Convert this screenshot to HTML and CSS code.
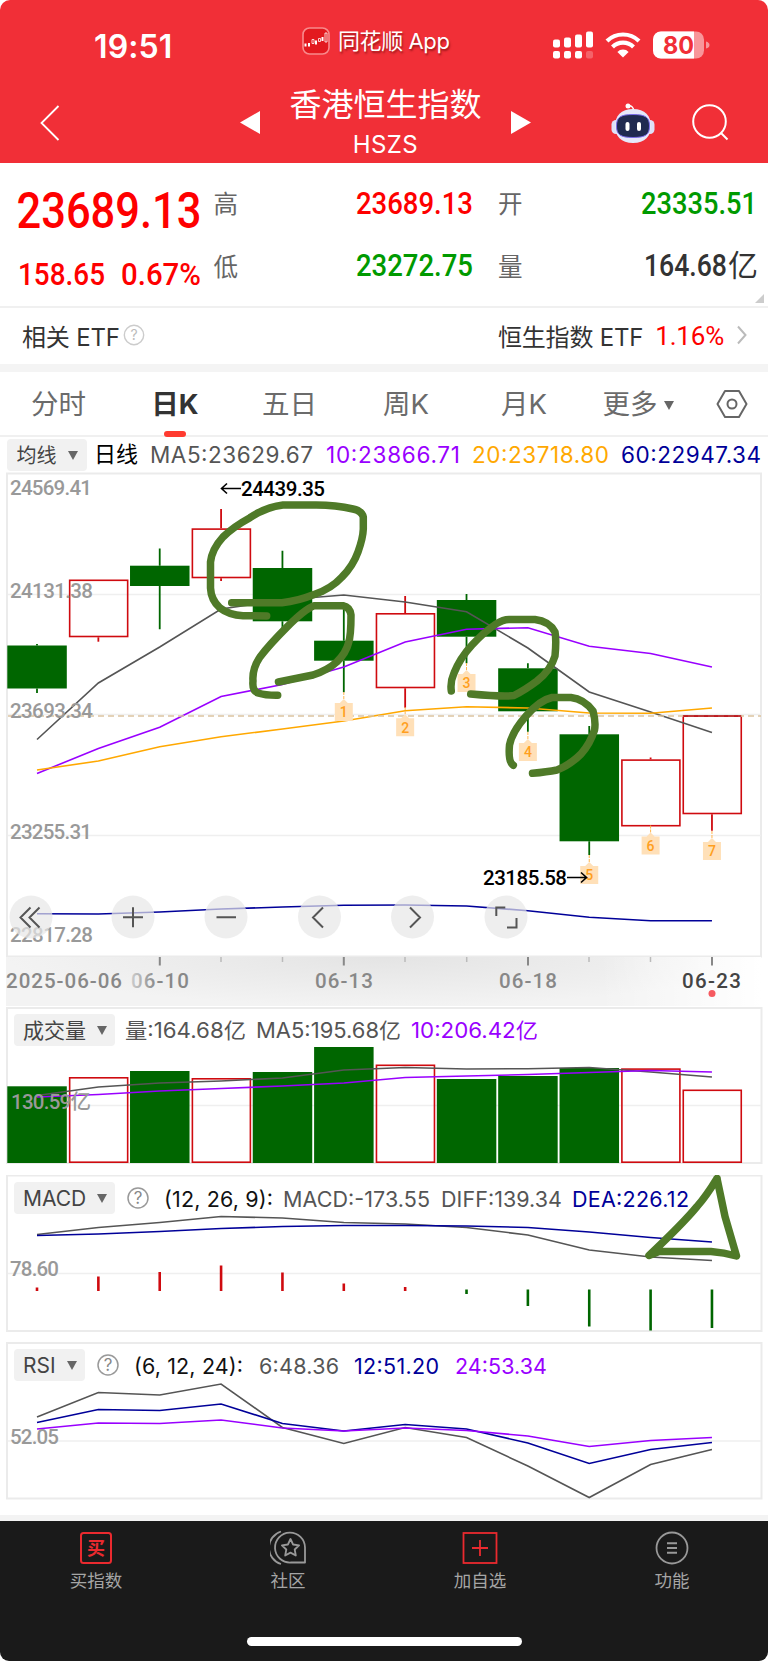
FILE: index.html
```html
<!DOCTYPE html>
<html lang="zh-CN">
<head>
    <meta charset="UTF-8">
    <meta name="viewport" content="width=device-width, initial-scale=1.0">
    <title>香港恒生指数</title>
    <link rel="stylesheet" href="styles.css">
</head>
<body>
<div class="app">

    <!-- 顶部 -->
    <header class="header">
        <div class="status">
            <span class="time">19:51</span>
            <div class="from-app">
                <svg width="28" height="28" viewBox="0 0 28 28">
                    <rect x="1" y="1" width="26" height="26" rx="6.5" fill="#e3191f" stroke="#f88a8c" stroke-width="1.6"/>
                    <path d="M3.500 16.500v3M7 16v3.500M14 13.500v4M20.500 10v4" stroke="#fff" stroke-width="2"/>
                    <path d="M10 12.500h2v4h-2zM16.500 11.500h2v3h-2zM23 6h2v9h-2z" stroke="#fff" stroke-width=".8" fill="none"/>
                </svg>
                <span>同花顺 App</span>
            </div>
            <div class="status-icons">
                <svg width="40" height="28" viewBox="0 0 40 28" fill="#fff">
                    <rect x="0" y="8.500" width="7" height="8" rx="2"/>
                    <rect x="11" y="6.500" width="7" height="10" rx="2"/>
                    <rect x="22" y="3.500" width="7" height="13" rx="2"/>
                    <rect x="33" y="0.500" width="7" height="16" rx="2"/>
                    <rect x="0" y="20" width="7" height="7.500" rx="2"/>
                    <rect x="11" y="20" width="7" height="7.500" rx="2"/>
                    <rect x="22" y="20" width="7" height="7.500" rx="2"/>
                    <rect x="33" y="20" width="7" height="7.500" rx="2" opacity=".25"/>
                </svg>
                <svg class="wifi" width="36" height="26" viewBox="0 0 36 26">
                    <path d="M2 9a23 23 0 0 1 32 0M7.500 15a15 15 0 0 1 21 0" fill="none" stroke="#fff" stroke-width="4.200"/>
                    <path d="M18 25.500l-5.600-5.600a8 8 0 0 1 11.200 0z" fill="#fff"/>
                </svg>
                <svg width="57" height="28" viewBox="0 0 57 28">
                    <rect x="0" y="0.500" width="51" height="27" rx="8" fill="#f8969a"/>
                    <path d="M8 .5h33v27H8a8 8 0 0 1-8-8v-11a8 8 0 0 1 8-8z" fill="#fff"/>
                    <path d="M53 10.500q3.500 1 3.500 3.500t-3.500 3.500z" fill="#f8969a"/>
                    <text x="10" y="22.500" textLength="31" lengthAdjust="spacingAndGlyphs" class="battery">80</text>
                </svg>
            </div>
        </div>
        <div class="title-bar">
            <svg class="back" width="20" height="36" viewBox="0 0 20 36"><path d="M18.500 1L1.500 18l17 17" fill="none" stroke="#fff" stroke-width="1.800"/></svg>
            <div class="title-center">
                <svg width="20" height="23" viewBox="0 0 20 23"><path d="M0 11.500L20 0v23z" fill="#fff"/></svg>
                <div class="title">
                    <h1>香港恒生指数</h1>
                    <p>HSZS</p>
                </div>
                <svg width="20" height="23" viewBox="0 0 20 23"><path d="M20 11.500L0 0v23z" fill="#fff"/></svg>
            </div>
            <div class="title-icons">
                <svg width="44" height="40" viewBox="0 0 44 40">
                    <path d="M17 3q5-1 6 5" fill="none" stroke="#fff" stroke-width="1.500"/>
                    <circle cx="17" cy="3" r="2.500" fill="#fff"/>
                    <rect x="0.500" y="17" width="9" height="14" rx="4.500" fill="#dfe1f8"/>
                    <rect x="34.500" y="17" width="9" height="14" rx="4.500" fill="#dfe1f8"/>
                    <path d="M22 6c12 0 18 7 18 17s-6 17-18 17S4 33 4 23 10 6 22 6z" fill="#e6e8fa"/>
                    <path d="M22 11.500c13 0 16.500 3 16.500 11.500S35 34.500 22 34.500 5.500 31.500 5.500 23 9 11.500 22 11.500z" fill="#202a50" stroke="#7a6be8" stroke-width="1"/>
                    <rect x="14.500" y="19" width="4" height="9" rx="2" fill="#fff"/>
                    <rect x="26" y="19" width="4" height="9" rx="2" fill="#fff"/>
                </svg>
                <svg width="37" height="37" viewBox="0 0 37 37"><circle cx="17.500" cy="17.500" r="16.300" fill="none" stroke="#fff" stroke-width="2"/><path d="M29 29l6.500 6.500" stroke="#fff" stroke-width="2"/></svg>
            </div>
        </div>
    </header>

    <!-- 行情 -->
    <svg class="quote" viewBox="0 163 768 145">
        <path d="M0 307h768" stroke="#f0f0f0" stroke-width="2"/>
        <g class="din">
            <g class="up">
                <text class="price" x="16.500" y="227.500" textLength="185" lengthAdjust="spacingAndGlyphs">23689.13</text>
                <text class="num" x="18" y="285" textLength="87" lengthAdjust="spacingAndGlyphs">158.65</text>
                <text class="num" x="121" y="285" textLength="80" lengthAdjust="spacingAndGlyphs">0.67%</text>
                <text class="num" x="356" y="214" textLength="117" lengthAdjust="spacingAndGlyphs">23689.13</text>
            </g>
            <g class="down">
                <text class="num" x="356" y="276" textLength="117" lengthAdjust="spacingAndGlyphs">23272.75</text>
                <text class="num" x="641" y="214" textLength="116" lengthAdjust="spacingAndGlyphs">23335.51</text>
            </g>
            <text class="num dark" x="644" y="276" textLength="83" lengthAdjust="spacingAndGlyphs">164.68</text>
        </g>
        <text class="dark" x="728" y="276" font-size="30">亿</text>
        <g class="name">
            <text x="213.500" y="213">高</text>
            <text x="213.500" y="275.500">低</text>
            <text x="498" y="213">开</text>
            <text x="498" y="275.500">量</text>
        </g>
        <path d="M764 294v9h-9z" fill="#ccc"/>
    </svg>

    <section class="etf">
        <span class="etf-name">相关 ETF</span>
        <svg width="22" height="22" viewBox="0 0 22 22"><circle cx="11" cy="11" r="9.700" fill="none" stroke="#ccc" stroke-width="1.400"/><text x="11" y="16" text-anchor="middle" class="q light">?</text></svg>
        <span class="etf-link">恒生指数 ETF</span>
        <span class="etf-rate">1.16%</span>
        <svg width="10" height="20" viewBox="0 0 10 20"><path d="M1 1.500l7.500 8.500L1 18.500" fill="none" stroke="#bbb" stroke-width="2"/></svg>
    </section>

    <!-- 周期 -->
    <nav class="tabs">
        <span>分时</span>
        <span class="active">日K</span>
        <span>五日</span>
        <span>周K</span>
        <span>月K</span>
        <span>更多<i class="caret"></i></span>
        <svg width="32" height="30" viewBox="0 0 32 30"><path d="M9 2h14l7.500 13L23 28H9L1.500 15z" fill="none" stroke="#666" stroke-width="2" stroke-linejoin="round"/><circle cx="16" cy="15" r="4.500" fill="none" stroke="#666" stroke-width="2"/></svg>
    </nav>

    <div class="legend legend-ma">
        <button>均线<i class="caret"></i></button>
        <svg width="681" height="34" viewBox="87 438 681 34">
            <text x="94" y="462" font-size="22" textLength="44" fill="#000">日线</text>
            <text class="c-gray" x="150" y="463" textLength="163">MA5:23629.67</text>
            <text class="c-purple" x="326" y="463" textLength="134">10:23866.71</text>
            <text class="c-orange" x="472" y="463" textLength="137">20:23718.80</text>
            <text class="c-navy" x="621" y="463" textLength="140">60:22947.34</text>
        </svg>
    </div>

    <!-- K线图 -->
    <svg class="chart" viewBox="0 472 768 535" id="kline">
        <defs>
            <linearGradient id="fade" x1="0" x2="1">
                <stop offset="0" stop-color="#fff" stop-opacity="0"/>
                <stop offset="1" stop-color="#fff"/>
            </linearGradient>
            <radialGradient id="shade" cx=".5" cy="0" r="1" gradientTransform="translate(.25 0) scale(.5 1)">
                <stop offset="0" stop-color="#e4e4e4"/>
                <stop offset="1" stop-color="#f3f3f3"/>
            </radialGradient>
            <linearGradient id="dim" x1="0" x2="1">
                <stop offset="0" stop-color="#ccc"/>
                <stop offset=".45" stop-color="#888"/>
            </linearGradient>
        </defs>
        <rect class="frame" x="7" y="473.500" width="754" height="483"/>
        <path class="grid" d="M8 594.500h753M8 714.500h753M8 835.500h753"/>
        <g id="candles"></g>
        <g id="maLines"></g>
        <path d="M8 716h753" stroke="#dcc3a0" stroke-width="1.300" stroke-dasharray="6 4"/>
        <path d="M683 716h58" stroke="#b5161c" stroke-width="1.600"/>
        <g class="axis">
            <text x="10" y="494.500" textLength="82">24569.41</text>
            <text x="10" y="597.500" textLength="83">24131.38</text>
            <text x="10" y="718" textLength="83">23693.34</text>
            <text x="10" y="838.700" textLength="82">23255.31</text>
            <text x="10" y="941.700" textLength="83">22817.28</text>
        </g>
        <g id="badges"></g>
        <g class="peak">
            <text x="241" y="496" textLength="84">24439.35</text>
            <text x="483" y="885" textLength="84">23185.58</text>
            <path d="M241 488.500h-19M227 483.500l-5.500 5 5.500 5M567 877.500h19M581 872.500l5.500 5-5.500 5" fill="none" stroke="#000" stroke-width="1.600"/>
        </g>
        <g class="pen">
            <path d="M231.700 602.700H282Q298 601 314 594.500Q331 589 342 577Q353 566 358 552Q363 538 363.300 529V517Q362 511 353 509Q336 505 316 505H283Q266 507 250 517.700Q233 527 223 537Q212 549 210.500 562V588Q211 600 220 608Q229 615 243 615.700L266.700 616"/>
            <path d="M278.500 682L313 675Q328 670 337 661.700Q346 653 348.500 643Q351 636 351 615Q350 607 343 605.700H314Q305 609 287 627Q269 645 260 657Q252 669 253 681Q252 691 258 693Q266 695.500 277.700 695.300"/>
            <path d="M451.300 691Q450 682 454 673Q460 658 472 645Q484 632 496 624Q503 619.500 509 619.500H535Q549 621 555 632Q556.500 640 555 656Q551 670 537 681Q525 690 514 695.500Q504 697 470.700 694"/>
            <path d="M513.300 765.300Q508 762 509.500 745Q512 732 526 716Q540 700 552 697.500H571Q584 699 593 711Q596 722 594.500 730Q590 744 581 754Q570 765 557 770Q547 772 532.500 773.300"/>
        </g>

        <!-- 日期轴 -->
        <rect x="6" y="957" width="755" height="49" fill="url(#shade)"/>
        <rect x="600" y="957" width="161" height="49" fill="url(#fade)"/>
        <path d="M159.800 957v8.500M343.800 957v8.500M528 957v8.500M712 957v8.500" stroke="#888" stroke-width="2"/>
        <path d="M221 957v5M282.500 957v5M405 957v5M466.700 957v5M589 957v5M650.500 957v5" stroke="#bbb" stroke-width="1.500"/>
        <g class="date">
            <text x="6" y="988" textLength="116">2025-06-06</text>
            <text x="131" y="988" textLength="58" class="dim">06-10</text>
            <text x="315" y="988" textLength="58">06-13</text>
            <text x="499" y="988" textLength="58">06-18</text>
            <text x="682" y="988" textLength="59" class="today">06-23</text>
        </g>
        <circle cx="712" cy="993.500" r="3.500" fill="#f65a60"/>

        <!-- 操作按钮 -->
        <g class="ctrl">
            <circle cx="31" cy="917" r="21.500"/><circle cx="133" cy="917" r="21.500"/><circle cx="226" cy="917" r="21.500"/>
            <circle cx="319.500" cy="917" r="21.500"/><circle cx="412.500" cy="917" r="21.500"/><circle cx="506" cy="917" r="21.500"/>
            <path d="M30.500 907.500l-10 10 10 10M39.500 907.500l-10 10 10 10M123 917.300h20M133 907.300v20M216.500 917.300h19.500M323 907.500l-10 10 10 10M410 907.500l10 10-10 10M496.300 916v-8.500h9M507 927.500h9.500v-9.500"/>
        </g>
    </svg>

    <!-- 成交量 -->
    <section class="panel">
        <div class="legend">
            <button>成交量<i class="caret"></i></button>
            <svg width="640" height="34" viewBox="115 1014 640 34">
                <g font-size="21">
                    <text class="c-gray" x="125" y="1039" textLength="121" lengthAdjust="spacingAndGlyphs">量:164.68亿</text>
                    <text class="c-gray" x="256" y="1039" textLength="145" lengthAdjust="spacingAndGlyphs">MA5:195.68亿</text>
                    <text class="c-purple" x="411" y="1039" textLength="127" lengthAdjust="spacingAndGlyphs">10:206.42亿</text>
                </g>
            </svg>
        </div>
        <svg class="chart overlay" viewBox="0 1007 768 158">
            <rect class="frame" x="7" y="1008" width="754.500" height="155"/>
            <path class="grid" d="M8 1105.500h753"/>
            <g id="volume"></g>
            <g class="axis"><text x="11" y="1108.500" textLength="80">130.59亿</text></g>
        </svg>
    </section>

    <!-- MACD -->
    <section class="panel">
        <div class="legend">
            <button>MACD<i class="caret"></i></button>
            <svg width="640" height="34" viewBox="115 1181 640 34">
                <circle cx="138" cy="1198" r="10" class="q-ring"/><text x="138" y="1204" text-anchor="middle" class="q">?</text>
                <text x="164" y="1206.500" textLength="109" fill="#111">(12, 26, 9):</text>
                <text class="c-gray" x="283" y="1206.500" textLength="147">MACD:-173.55</text>
                <text class="c-gray" x="441" y="1206.500" textLength="121">DIFF:139.34</text>
                <text class="c-navy" x="572" y="1206.500" textLength="117">DEA:226.12</text>
            </svg>
        </div>
        <svg class="chart overlay" viewBox="0 1174.500 768 158">
            <rect class="frame" x="7" y="1175" width="754.500" height="155.500"/>
            <path class="grid" d="M8 1273h753"/>
            <g id="macd"></g>
            <g class="axis"><text x="10" y="1275.500" textLength="49">78.60</text></g>
            <g class="pen">
                <path d="M717 1178Q706 1196 697 1206Q683 1223 649 1255L659 1251H711Q724 1252 736.500 1255.500L725 1216L717 1178"/>
            </g>
        </svg>
    </section>

    <!-- RSI -->
    <section class="panel">
        <div class="legend">
            <button>RSI<i class="caret"></i></button>
            <svg width="640" height="34" viewBox="85 1349 640 34">
                <circle cx="108" cy="1366" r="10" class="q-ring"/><text x="108" y="1372" text-anchor="middle" class="q">?</text>
                <text x="134" y="1374.500" textLength="109" fill="#111">(6, 12, 24):</text>
                <text class="c-gray" x="259" y="1374.500" textLength="80">6:48.36</text>
                <text class="c-navy" x="354" y="1374.500" textLength="85">12:51.20</text>
                <text class="c-purple" x="455" y="1374.500" textLength="92">24:53.34</text>
            </svg>
        </div>
        <svg class="chart overlay" viewBox="0 1342 768 158">
            <rect class="frame" x="7" y="1343" width="754.500" height="155.500"/>
            <path class="grid" d="M8 1441h753"/>
            <g id="rsi"></g>
            <g class="axis"><text x="10" y="1443.500" textLength="49">52.05</text></g>
        </svg>
    </section>

    <!-- 底部导航 -->
    <footer class="bottom">
        <div class="bottom-tabs">
            <div class="item">
                <svg width="36" height="36" viewBox="0 0 36 36"><rect x="3" y="3" width="30" height="30" rx="2.500" fill="none" stroke="#ea2a2f" stroke-width="2"/><text x="18" y="24.500" text-anchor="middle" class="buy">买</text></svg>
                <span>买指数</span>
            </div>
            <div class="item">
                <svg width="36" height="36" viewBox="0 0 36 36" fill="none" stroke="#999" stroke-width="1.800" stroke-linejoin="round">
                    <path d="M11 1.500a17 17 0 0 0 0 32.500"/>
                    <path d="M35 32.500H21a15 15 0 1 1 14-15z"/>
                    <path d="M20.500 9l2.600 5.500 6 .8-4.400 4.200 1.100 6-5.300-2.900-5.300 2.900 1.100-6-4.400-4.200 6-.8z"/>
                </svg>
                <span>社区</span>
            </div>
            <div class="item">
                <svg width="36" height="36" viewBox="0 0 36 36" fill="none" stroke="#ea2a2f" stroke-width="1.800"><rect x="1.500" y="3" width="33" height="30"/><path d="M10 18h16M18 10v16"/></svg>
                <span>加自选</span>
            </div>
            <div class="item">
                <svg width="36" height="36" viewBox="0 0 36 36" fill="none" stroke="#999" stroke-width="1.800"><circle cx="18" cy="18" r="15.500"/><path d="M13 13.300h10M13 18h10M13 22.700h10" stroke-width="2"/></svg>
                <span>功能</span>
            </div>
        </div>
        <div class="home-bar"></div>
    </footer>
</div>

<script src="script.js"></script>
</body>
</html>
```
FILE: styles.css
```css
* {
    box-sizing: border-box;
}
body {
    margin: 0;
    background: #fff;
    font-family: Inter, "Noto Sans CJK SC", sans-serif;
    color: #333;
}
.app {
    width: 768px;
    height: 1662px;
    overflow: hidden;
    display: flex;
    flex-direction: column;
}
svg {
    display: block;
    flex-shrink: 0;
}
button {
    font-family: inherit;
    border: none;
}

/* 顶部 */
.header {
    height: 163px;
    background: #f12f37;
    border-radius: 10px 10px 0 0;
    color: #fff;
    flex-shrink: 0;
}
.status {
    height: 82px;
    padding: 7px 58px 0 94px;
    display: grid;
    grid-template-columns: 208px 1fr auto;
    align-items: center;
}
.time {
    font-size: 32px;
    font-weight: 600;
    letter-spacing: 0.1px;
    padding-top: 4px;
}
.from-app {
    display: flex;
    align-items: center;
    gap: 8px;
    height: 28px;
    font-size: 22px;
    letter-spacing: -0.4px;
    margin-top: -7px;
    text-shadow: 1px 2px 2px rgba(80, 0, 0, 0.5);
}
.from-app span {
    margin-top: -4px;
}
.status-icons {
    display: flex;
    align-items: center;
}
.wifi {
    margin: 0 12px;
}
.battery {
    font-size: 24px;
    font-weight: 700;
    fill: #f12f37;
}
.title-bar {
    height: 81px;
    display: grid;
    grid-template-columns: 240px 291px 1fr;
    align-items: center;
}
.back {
    margin-left: 40px;
}
.title-center {
    display: flex;
    align-items: center;
    justify-content: space-between;
}
.title {
    text-align: center;
    height: 81px;
}
.title h1 {
    margin: 2px 0 0;
    font-size: 32px;
    font-weight: 400;
    line-height: 42px;
}
.title p {
    margin: 3px 0 0;
    font-size: 24px;
    letter-spacing: 0.4px;
    line-height: 32px;
}
.title-icons {
    display: flex;
    align-items: center;
    gap: 37px;
    margin-left: 80px;
}

/* 行情 */
.quote {
    width: 768px;
    height: 145px;
}
.din {
    font-family: Roboto, sans-serif;
}
.price {
    font-size: 50px;
    font-weight: 500;
}
.num {
    font-size: 31.5px;
    font-weight: 500;
}
.up {
    fill: #fe0000;
}
.down {
    fill: #009a00;
}
.dark {
    fill: #333;
}
.name {
    font-size: 24.5px;
    fill: #666;
}
.etf {
    display: flex;
    align-items: center;
    height: 64px;
    padding: 0 21px 2px 22px;
    border-bottom: 8px solid #f4f4f4;
    font-size: 24px;
    letter-spacing: -0.2px;
    flex-shrink: 0;
}
.etf-name {
    margin-right: 3px;
}
.etf-link {
    margin-left: auto;
}
.etf-rate {
    font-family: Roboto, sans-serif;
    font-size: 26px;
    color: #fe0000;
    margin: 2px 13px 0 12px;
}
.q {
    font-size: 17px;
    fill: #888;
}
.q.light {
    font-size: 14px;
    fill: #bbb;
}
.q-ring {
    fill: none;
    stroke: #999;
    stroke-width: 1.5;
}

/* 周期切换 */
.tabs {
    display: grid;
    grid-template-columns: 117px 116px 113px 120px 116px 112px 74px;
    align-items: center;
    height: 65px;
    border-bottom: 2px solid #f0f0f0;
    font-size: 27.5px;
    color: #6b6b6b;
    flex-shrink: 0;
}
.tabs span {
    height: 64px;
    line-height: 64px;
    text-align: center;
    white-space: nowrap;
}
.tabs svg {
    justify-self: center;
    margin-left: 2px;
}
.tabs .active {
    font-weight: 700;
    color: #333;
}
.tabs .active::after {
    content: "";
    display: block;
    width: 22px;
    height: 6px;
    margin: -5px auto 0;
    border-radius: 3px;
    background: #ff3b30;
}
.caret {
    display: inline-block;
    border: 5.5px solid transparent;
    border-top: 9px solid #666;
    border-bottom: 0;
    margin-left: 6px;
    vertical-align: 4px;
}

/* 指标图例 */
.legend {
    display: flex;
    align-items: center;
    height: 32px;
    font-size: 21.5px;
    padding-left: 14px;
    flex-shrink: 0;
}
.legend button {
    height: 32px;
    padding: 0 8px 0 9px;
    background: #f1f1f1;
    border-radius: 4px;
    font-size: 21px;
    line-height: 34px;
    color: #444;
    white-space: nowrap;
}
.legend .caret {
    margin-left: 11px;
    vertical-align: 3px;
}
.legend-ma {
    padding: 1px 0 0 7px;
    height: 35px;
    font-size: 22.5px;
}
.legend-ma button {
    width: 80px;
    padding: 0;
    font-size: 20px;
}
.c-gray {
    fill: #555;
}
.c-purple {
    fill: #9900ff;
}
.c-orange {
    fill: #ffa800;
}
.c-navy {
    fill: #000099;
}

/* 图表 */
.chart {
    width: 768px;
}
#kline {
    height: 535px;
}
.frame {
    fill: none;
    stroke: #ebebeb;
    stroke-width: 2;
}
.grid {
    stroke: #efefef;
    stroke-width: 1.5;
    fill: none;
}
.axis,
.date,
.peak {
    font-family: Roboto, "Noto Sans CJK SC", sans-serif;
    font-size: 20.5px;
    font-weight: 500;
    fill: #999;
}
.date {
    fill: #888;
}
.date .dim {
    fill: url(#dim);
}
.date .today {
    fill: #444;
}
.peak {
    fill: #000;
}
.line {
    fill: none;
    stroke-width: 1.6;
}
.pen path {
    fill: none;
    stroke: #4f7a28;
    stroke-width: 7.5;
    stroke-linecap: round;
    stroke-linejoin: round;
}
.ctrl circle {
    fill: #e7e7e7;
    fill-opacity: 0.7;
}
.ctrl path {
    fill: none;
    stroke: #555;
    stroke-width: 2;
}
.badge {
    fill: #ffe0b8;
}
.badge-num {
    font-family: Roboto, sans-serif;
    font-size: 14px;
    font-weight: 500;
    fill: #ff9f20;
    text-anchor: middle;
}
.panel {
    display: grid;
    height: 158px;
    margin-bottom: 9.5px;
    flex-shrink: 0;
}
.panel > * {
    grid-area: 1 / 1;
}
.panel .legend {
    margin-top: 7px;
}
.panel .overlay {
    height: 158px;
}

/* 底部导航 */
.bottom {
    height: 147px;
    margin-top: 5px;
    border-top: 6px solid #f3f3f3;
    flex-shrink: 0;
}
.bottom-tabs {
    display: grid;
    grid-template-columns: repeat(4, 1fr);
    height: 140px;
    padding-top: 9px;
    background: #1a1a1a;
    border-radius: 0 0 9px 9px;
}
.item {
    display: flex;
    flex-direction: column;
    align-items: center;
    font-size: 17.5px;
    line-height: 26px;
    color: #a5a5a5;
    gap: 2px;
}
.buy {
    font-size: 18px;
    font-weight: 700;
    fill: #ea2a2f;
}
.home-bar {
    width: 275px;
    height: 9px;
    margin: -24px auto 0;
    border-radius: 5px;
    background: #fff;
}
```
FILE: script.js
```js
const NS = 'http://www.w3.org/2000/svg';
const RED = '#cf0a0f';
const GREEN = '#006600';
const xs = Array.from({ length: 12 }, (_, i) => 37 + i * 61.36);

function add(id, tag, attrs, text) {
    const el = document.createElementNS(NS, tag);
    for (const k in attrs) el.setAttribute(k, attrs[k]);
    if (text) el.textContent = text;
    document.getElementById(id).appendChild(el);
}

function line(id, ys, color) {
    add(id, 'polyline', { class: 'line', stroke: color, points: ys.map((y, i) => xs[i] + ',' + y).join(' ') });
}

function body(id, i, top, bottom, up) {
    if (up) {
        add(id, 'rect', { x: xs[i] - 28.7, y: top + 0.8, width: 58, height: bottom - top - 1.6, fill: 'none', stroke: RED, 'stroke-width': 1.6 });
    } else {
        add(id, 'rect', { x: xs[i] - 29.7, y: top, width: 59.5, height: bottom - top, fill: GREEN });
    }
}

// 实体顶, 实体底, 最高, 最低, 是否上涨
const candles = [
    [645.5, 688.5, 644, 693, 0],
    [579.5, 637.3, 579.5, 641.7, 1],
    [565.7, 586, 548.5, 629.3, 0],
    [528.3, 578.3, 509, 581, 1],
    [568, 621.3, 550.7, 630, 0],
    [640.7, 660.7, 602.7, 692.3, 0],
    [613, 688.3, 596, 707.7, 1],
    [600, 636.7, 594, 663.3, 0],
    [668.3, 711.3, 663.3, 731.7, 0],
    [734.3, 841.3, 726, 855, 0],
    [759.3, 826.5, 757.5, 826.5, 1],
    [715.3, 814.3, 715.3, 830.7, 1]
];
candles.forEach(([top, bottom, high, low, up], i) => {
    const c = up ? RED : GREEN;
    add('candles', 'path', { d: `M${xs[i]} ${high}V${top}M${xs[i]} ${bottom}V${low}`, stroke: c, 'stroke-width': 1.8 });
    body('candles', i, top, bottom, up);
});

line('maLines', [739.5, 683, 647, 609, 600, 595, 602, 611.7, 648, 692, 712, 732.5], '#555');
line('maLines', [773.5, 748.5, 727.3, 696.5, 684.5, 667, 642, 629.3, 627.7, 646.3, 653.5, 667], '#9900ff');
line('maLines', [770, 761, 746.7, 736.7, 729, 721, 710.7, 706.7, 708, 713, 713.3, 708], '#ffa800');
line('maLines', [913.7, 914, 912, 909, 907, 905.3, 905, 906, 910.7, 917.3, 920.7, 920.7], '#000099');

// 九转序列
[703, 718.2, 674, 743, 866, 836.5, 842].forEach((y, n) => {
    const x = xs[n + 5];
    add('badges', 'path', { d: `M${x} ${y - 11}v8`, stroke: '#ffb54d', 'stroke-dasharray': '3 1' });
    add('badges', 'path', { class: 'badge', d: `M${x - 9} ${y}h5l4-4 4 4h5v18h-18z` });
    add('badges', 'text', { class: 'badge-num', x: x, y: y + 14.3 }, String(n + 1));
});

const vol = [[1086.3, 0], [1077, 1], [1071, 0], [1078, 1], [1072, 0], [1047, 0], [1064.5, 1], [1079, 0], [1076, 0], [1068, 0], [1068.3, 1], [1089.5, 1]];
vol.forEach(([top, up], i) => body('volume', i, top, 1163, up));
line('volume', [1095.5, 1087, 1083, 1081, 1078, 1070, 1067.5, 1069, 1068.7, 1067.5, 1072, 1077], '#555');
line('volume', [1097, 1094.5, 1091, 1088.5, 1086, 1083, 1077.5, 1076, 1074.5, 1072.5, 1070.5, 1072], '#9900ff');

[1287, 1276, 1271.5, 1265, 1272, 1283, 1286.5, 1293.5, 1305.5, 1326, 1330, 1327.5].forEach((y, i) => {
    const up = i < 7;
    add('macd', 'path', { d: `M${xs[i]} ${up ? 1290.5 : 1289}V${y}`, stroke: up ? RED : GREEN, 'stroke-width': 2.6 });
});
line('macd', [1234, 1227, 1222, 1216, 1217.5, 1222, 1223.5, 1227, 1234.5, 1249.5, 1256.5, 1260], '#555');
line('macd', [1235, 1233.5, 1231, 1228, 1226, 1225, 1225, 1225.5, 1227, 1231.5, 1237, 1241.5], '#000099');

line('rsi', [1417, 1392.5, 1395, 1384, 1427.5, 1443.5, 1427.5, 1437.5, 1466, 1497.5, 1464.5, 1449.5], '#555');
line('rsi', [1422.5, 1409.5, 1410.5, 1404, 1423.5, 1431, 1424.5, 1429, 1443, 1463.5, 1449.5, 1442.5], '#000099');
line('rsi', [1429, 1423, 1423.5, 1420, 1428, 1431, 1428, 1430.5, 1436, 1446.5, 1440.5, 1437.5], '#9900ff');
```
